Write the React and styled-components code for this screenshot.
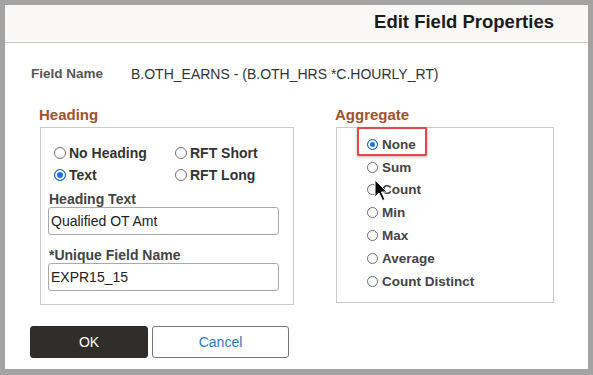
import React from 'react';
import styled, { createGlobalStyle } from 'styled-components';

const Global = createGlobalStyle`
  html, body { margin: 0; padding: 0; }
  body {
    background: #a3a3a3;
    font-family: "Liberation Sans", Arial, sans-serif;
    width: 593px;
    height: 375px;
    overflow: hidden;
  }
`;

const Dialog = styled.div`
  margin: 5px 0 0 5px;
  width: 583px;
  height: 364px;
  background: #fff;
  display: flex;
  flex-direction: column;
`;

const Header = styled.div`
  box-sizing: border-box;
  height: 38px;
  background: #f9f8f7;
  border-bottom: 1px solid #c9c9c9;
  display: flex;
  justify-content: flex-end;
  padding: 6px 34px 0 0;
`;

const Title = styled.h1`
  margin: 0;
  font-size: 18.5px;
  line-height: 22px;
  font-weight: 700;
  color: #1b1b1b;
`;

const FieldRow = styled.div`
  display: flex;
  margin-top: 23px;
  padding-left: 26px;
  line-height: 16px;
  font-size: 14px;
`;

const FieldLabel = styled.span`
  width: 100px;
  font-weight: 700;
  font-size: 13.5px;
  color: #555;
`;

const FieldValue = styled.span`
  color: #333;
`;

const Columns = styled.div`
  display: flex;
  align-items: flex-start;
  gap: 42px;
  margin-top: 24px;
  padding-left: 35px;
`;

const Column = styled.div`
  display: flex;
  flex-direction: column;
  width: ${p => p.$w}px;
`;

const SectionTitle = styled.div`
  font-size: 15px;
  line-height: 18px;
  font-weight: 700;
  color: #a0522a;
  margin-bottom: 3px;
  margin-left: -1px;
`;

const Box = styled.div`
  position: relative;
  box-sizing: border-box;
  border: 1px solid #cdc9c6;
  padding: ${p => p.$pad};
`;

const RadioGrid = styled.div`
  display: grid;
  grid-template-columns: 121px auto;
  padding-left: 5px;
`;

const RadioRow = styled.div`
  position: relative;
  display: flex;
  align-items: center;
  gap: ${p => (p.$small ? 4 : 3)}px;
  height: ${p => (p.$small ? 22.8 : 22)}px;
  font-size: ${p => (p.$small ? 13.5 : 14)}px;
  font-weight: 700;
  color: ${p => (p.$small ? '#444' : '#333')};
`;

const Circle = styled.span`
  box-sizing: border-box;
  width: ${p => p.$size}px;
  height: ${p => p.$size}px;
  border-radius: 50%;
  flex: none;
  border: 1px solid ${p => (p.$checked ? '#1565c0' : '#707070')};
  background: ${p => (p.$checked ? '#1a73e8' : '#fff')};
  box-shadow: ${p => (p.$checked ? 'inset 0 0 0 2px #fff' : 'none')};
`;

const FieldLabelSmall = styled.div`
  font-size: 14px;
  font-weight: 700;
  line-height: 15px;
  color: #444;
  margin-top: ${p => p.$mt}px;
`;

const TextInput = styled.div`
  box-sizing: border-box;
  width: 231px;
  height: 28px;
  margin-left: -1px;
  border: 1px solid #a9a9a9;
  border-radius: 3px;
  padding: 0 2px;
  display: flex;
  align-items: center;
  font-size: 14px;
  color: #222;
`;

const AggList = styled.div`
  display: flex;
  flex-direction: column;
`;

const Highlight = styled.span`
  position: absolute;
  left: -10px;
  top: -6px;
  width: 70px;
  height: 29px;
  box-sizing: border-box;
  border: 2px solid #e8474a;
  border-radius: 1px;
  box-shadow: 0 1px 3px rgba(0, 0, 0, 0.3);
`;

const Cursor = styled.svg`
  position: absolute;
  left: 37px;
  top: 51px;
`;

const ButtonRow = styled.div`
  display: flex;
  gap: 4px;
  margin-top: 21px;
  padding-left: 25px;
`;

const Button = styled.button`
  box-sizing: border-box;
  width: ${p => p.$w}px;
  height: 32px;
  border-radius: 3px;
  font-family: "Liberation Sans", Arial, sans-serif;
  font-size: 14px;
  border: 1px solid ${p => (p.$primary ? '#2f2b28' : '#777')};
  background: ${p => (p.$primary ? '#312d2a' : '#fff')};
  color: ${p => (p.$primary ? '#fff' : '#2a7bc4')};
  padding: 0;
`;

function Radio({ label, checked, small, children }) {
  return (
    <RadioRow $small={small}>
      {children}
      <Circle $size={small ? 11 : 12} $checked={checked} />
      <span>{label}</span>
    </RadioRow>
  );
}

const aggregates = ['None', 'Sum', 'Count', 'Min', 'Max', 'Average', 'Count Distinct'];

export default function App() {
  return (
    <>
      <Global />
      <Dialog>
        <Header>
          <Title>Edit Field Properties</Title>
        </Header>
        <FieldRow>
          <FieldLabel>Field Name</FieldLabel>
          <FieldValue>B.OTH_EARNS - (B.OTH_HRS *C.HOURLY_RT)</FieldValue>
        </FieldRow>
        <Columns>
          <Column $w={254}>
            <SectionTitle>Heading</SectionTitle>
            <Box $pad="14px 8px 13px 8px">
              <RadioGrid>
                <Radio label="No Heading" />
                <Radio label="RFT Short" />
                <Radio label="Text" checked />
                <Radio label="RFT Long" />
              </RadioGrid>
              <FieldLabelSmall $mt={6}>Heading Text</FieldLabelSmall>
              <TextInput>Qualified OT Amt</TextInput>
              <FieldLabelSmall $mt={13}>*Unique Field Name</FieldLabelSmall>
              <TextInput>EXPR15_15</TextInput>
            </Box>
          </Column>
          <Column $w={218}>
            <SectionTitle>Aggregate</SectionTitle>
            <Box $pad="5px 8px 9px 30px">
              <AggList>
                {aggregates.map((a, i) => (
                  <Radio key={a} label={a} small checked={i === 0}>
                    {i === 0 && <Highlight />}
                  </Radio>
                ))}
              </AggList>
              <Cursor width="14" height="23" viewBox="0 0 14 23">
                <path
                  d="M1 1 L1 18 L5 14 L8.5 21.5 L11 20.5 L7.5 13 L13 13 Z"
                  fill="#000"
                  stroke="#fff"
                  strokeWidth="1"
                  strokeLinejoin="round"
                />
              </Cursor>
            </Box>
          </Column>
        </Columns>
        <ButtonRow>
          <Button $primary $w={118}>OK</Button>
          <Button $w={137}>Cancel</Button>
        </ButtonRow>
      </Dialog>
    </>
  );
}
